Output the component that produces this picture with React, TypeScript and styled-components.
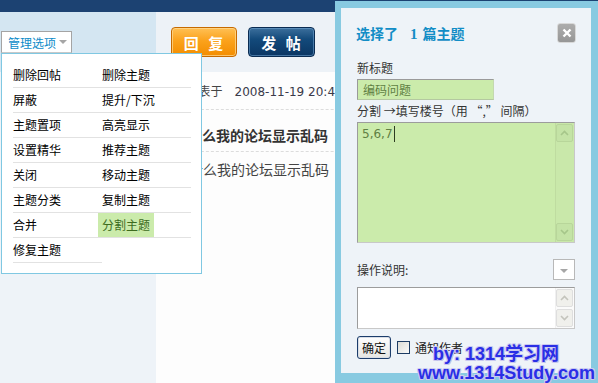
import * as React from 'react'
import styled, { createGlobalStyle, css } from 'styled-components'

const GlobalStyle = createGlobalStyle`
    html, body {
        margin: 0;
        padding: 0;
        background: #ffffff;
    }
    body {
        font-family: "Noto Sans CJK SC", "DejaVu Sans", sans-serif;
        font-size: 12px;
        color: #333;
        width: 598px;
        height: 383px;
        overflow: hidden;
    }
`

const CJK = `"Noto Sans CJK SC", "DejaVu Sans", sans-serif`
const LATIN = `"DejaVu Sans", "Noto Sans CJK SC", sans-serif`

const Page = styled.div`
    position: relative;
    width: 598px;
    height: 383px;
    overflow: hidden;
    background: #fdfdfd;
`

const TopBar = styled.div`
    height: 12px;
    background: #1c4272;
`

const Body = styled.div`
    display: flex;
    height: 371px;
`

const Sidebar = styled.div`
    position: relative;
    width: 156px;
    background: #eef3f8;
`

const SideHead = styled.div`
    height: 60px;
    box-sizing: border-box;
    padding: 19px 0 0 1px;
    background: #d4e6f2;
`

const SelectBox = styled.div`
    display: flex;
    align-items: center;
    justify-content: space-between;
    box-sizing: border-box;
    width: 71px;
    height: 22px;
    padding: 0 4px 0 6px;
    background: #fff;
    border: 1px solid #a4a4a4;
    border-bottom-color: #c8c8c8;
    color: #0c8bc9;
    font-family: ${CJK};
    font-size: 12px;
`

const Caret = styled.span<{ $size?: number }>`
    width: 0;
    height: 0;
    border-left: ${p => p.$size ?? 4}px solid transparent;
    border-right: ${p => p.$size ?? 4}px solid transparent;
    border-top: ${p => p.$size ?? 4}px solid #a6a6a6;
`

const Menu = styled.ul`
    position: absolute;
    top: 41px;
    left: 1px;
    z-index: 5;
    display: grid;
    grid-template-columns: 89px 89px;
    width: 201px;
    box-sizing: border-box;
    margin: 0;
    padding: 9px 11px 10px 11px;
    list-style: none;
    background: #fff;
    border: 1px solid #80c8e2;
`

const MenuItem = styled.li`
    height: 24px;
    border-bottom: 1px solid #e2e2e2;
`

const MenuLink = styled.a<{ $active?: boolean }>`
    display: inline-block;
    margin-left: -4px;
    padding: 0 4px;
    line-height: 24px;
    font-family: ${CJK};
    font-size: 12px;
    color: #000;
    text-decoration: none;
    ${p => p.$active && css`
        background: #cbebab;
        color: #3d6b1e;
    `}
`

const Main = styled.div`
    flex: 1;
    min-width: 0;
    background: #fdfdfd;
`

const Toolbar = styled.div`
    display: flex;
    align-items: center;
    gap: 11px;
    height: 60px;
    box-sizing: border-box;
    padding: 0 0 0 15px;
    background: #edf2f7;
`

const ActionButton = styled.button<{ $tone: 'orange' | 'navy' }>`
    width: ${p => (p.$tone === 'orange' ? 66 : 67)}px;
    height: 30px;
    padding: 0;
    border-radius: 4px;
    font-family: ${CJK};
    font-size: 15px;
    font-weight: 700;
    color: #fff;
    word-spacing: 4px;
    letter-spacing: 1px;
    cursor: pointer;
    ${p => p.$tone === 'orange'
        ? css`
            border: 1px solid #c66a00;
            background: linear-gradient(#ffc055 0%, #fba21c 45%, #f38d00 100%);
            box-shadow: inset 0 0 0 1px rgba(255, 220, 150, 0.7);
        `
        : css`
            border: 1px solid #0a2c52;
            background: linear-gradient(#3c6f9c 0%, #134a7b 40%, #0b3663 100%);
            box-shadow: inset 0 0 0 1px rgba(110, 160, 205, 0.6);
        `}
`

const PostRow = styled.div<{ $pad: string; $dashed?: boolean }>`
    padding: ${p => p.$pad};
    white-space: nowrap;
    ${p => p.$dashed && css`border-bottom: 1px dashed #dcdcdc;`}
`

const Meta = styled.span`
    font-family: ${CJK};
    font-size: 12px;
    line-height: 16px;
    color: #444;
`

const DateText = styled.span`
    margin-left: 12px;
    font-family: ${LATIN};
    font-size: 12px;
    color: #3a3a4a;
`

const PostTitle = styled.h3`
    margin: 0;
    font-family: ${CJK};
    font-size: 14px;
    line-height: 20px;
    font-weight: 700;
    color: #333;
`

const PostBody = styled.p`
    margin: 0;
    font-family: ${CJK};
    font-size: 14px;
    line-height: 20px;
    color: #444;
`

/* ---- dialog ---- */

const Dialog = styled.div`
    position: absolute;
    top: 1px;
    left: 335px;
    z-index: 10;
    width: 263px;
    height: 382px;
    box-sizing: border-box;
    padding: 7px 7px 10px 6px;
    background: #88cae1;
`

const Panel = styled.div`
    height: 100%;
    box-sizing: border-box;
    padding: 15px 16px 0 16px;
    background: #eef3f8;
    display: flex;
    flex-direction: column;
`

const TitleRow = styled.div`
    display: flex;
    align-items: center;
    justify-content: space-between;
    height: 20px;
    margin-right: -1px;
`

const Title = styled.h2`
    margin: 0 0 0 -1px;
    font-family: ${CJK};
    font-size: 14px;
    font-weight: 700;
    color: #128dc6;
`

const Count = styled.span`
    margin: 0 5px 0 12px;
    font-family: "Liberation Serif", serif;
    font-size: 15px;
`

const CloseButton = styled.button`
    display: flex;
    align-items: center;
    justify-content: center;
    width: 19px;
    height: 20px;
    padding: 0;
    border: 1px solid #d8d8d8;
    border-radius: 3px;
    background: linear-gradient(#acacac 0%, #a2a2a2 50%, #969696 100%);
    cursor: pointer;
`

const Label = styled.div<{ $top: number }>`
    margin-top: ${p => p.$top}px;
    font-family: ${CJK};
    font-size: 12px;
    line-height: 16px;
    color: #333;
`

const GreenField = styled.div`
    margin-top: 3px;
    width: 137px;
    height: 21px;
    box-sizing: border-box;
    padding: 0 5px;
    border: 1px solid #9a9a9a;
    border-right-color: #c4d8b0;
    border-bottom-color: #b4c8a0;
    background: #cbebab;
    font-family: ${CJK};
    font-size: 12px;
    line-height: 19px;
    color: #5f7f43;
`

const Area = styled.div<{ $green?: boolean; $top: number; $height: number }>`
    display: flex;
    margin-top: ${p => p.$top}px;
    width: 218px;
    height: ${p => p.$height}px;
    box-sizing: border-box;
    border: 1px solid #9c9c9c;
    border-right-color: #c8c8c8;
    border-bottom-color: #c8c8c8;
    background: ${p => (p.$green ? '#cbebab' : '#ffffff')};
`

const AreaText = styled.div`
    flex: 1;
    padding: 3px 4px;
    font-family: ${LATIN};
    font-size: 12px;
    line-height: 16px;
    color: #5f7f43;
`

const Cursor = styled.span`
    display: inline-block;
    width: 1px;
    height: 16px;
    margin-left: 1px;
    vertical-align: top;
    background: #2c3c20;
`

const ScrollCol = styled.div<{ $green?: boolean }>`
    display: flex;
    flex-direction: column;
    justify-content: space-between;
    width: 17px;
    padding: 1px 1px 1px 0;
    background: ${p => (p.$green ? '#c9e8aa' : '#fbfbfb')};
    border-left: 1px solid ${p => (p.$green ? '#bfdca0' : '#f0f0f0')};
`

const ScrollBtn = styled.div<{ $green?: boolean }>`
    display: flex;
    align-items: center;
    justify-content: center;
    height: 16px;
    border: 1px solid ${p => (p.$green ? '#b8d69a' : '#dedede')};
    border-radius: 2px;
    background: ${p => (p.$green ? '#c4e3a6' : '#f0f0ec')};
`

const NoteRow = styled.div`
    display: flex;
    align-items: center;
    justify-content: space-between;
    margin-top: 16px;
    width: 218px;
`

const SmallSelect = styled.div`
    display: flex;
    align-items: center;
    justify-content: center;
    width: 22px;
    height: 21px;
    box-sizing: border-box;
    padding-top: 2px;
    border: 1px solid #b8b8b8;
    background: #fff;
`

const FootRow = styled.div`
    display: flex;
    align-items: center;
    gap: 6px;
    margin-top: 7px;
`

const OkButton = styled.button`
    width: 34px;
    height: 23px;
    padding: 0;
    border: 1px solid #1c3d6b;
    border-radius: 3px;
    background: linear-gradient(#fefefe, #e6e6e2);
    box-shadow: inset 0 0 0 1px #d8dde6;
    font-family: ${CJK};
    font-size: 12px;
    color: #111;
`

const Check = styled.label`
    display: flex;
    align-items: center;
    gap: 5px;
    font-family: ${CJK};
    font-size: 12px;
    color: #222;
`

const CheckBox = styled.span`
    width: 11px;
    height: 11px;
    border: 1px solid #1d3c64;
    background: linear-gradient(135deg, #dcdcd6, #fafafa);
`

const Watermark = styled.div`
    position: absolute;
    right: 3px;
    bottom: 0;
    z-index: 20;
    font-family: "Liberation Sans", "Noto Sans CJK SC", sans-serif;
    font-weight: 700;
    color: #2a2ee6;
    line-height: 19px;
    text-shadow:
        1px 0 0 #c8c8f0, -1px 0 0 #c8c8f0, 0 1px 0 #c8c8f0, 0 -1px 0 #c8c8f0,
        1px 1px 0 #b8b8e8, -1px -1px 0 #e0e0f8, 1px -1px 0 #d0d0f0, -1px 1px 0 #d0d0f0;
    pointer-events: none;
`

const MarkLine = styled.div<{ $indent?: number }>`
    padding-left: ${p => p.$indent ?? 0}px;
    font-size: 18px;
    white-space: nowrap;
`

const menuItems: { label: string; active?: boolean }[] = [
    { label: '删除回帖' }, { label: '删除主题' },
    { label: '屏蔽' }, { label: '提升/下沉' },
    { label: '主题置项' }, { label: '高亮显示' },
    { label: '设置精华' }, { label: '推荐主题' },
    { label: '关闭' }, { label: '移动主题' },
    { label: '主题分类' }, { label: '复制主题' },
    { label: '合并' }, { label: '分割主题', active: true },
    { label: '修复主题' },
]

const Chevron = ({ up, color }: { up?: boolean; color: string }) => (
    <svg width="9" height="6" viewBox="0 0 9 6">
        <path d={up ? 'M1 5 L4.5 1.5 L8 5' : 'M1 1 L4.5 4.5 L8 1'} fill="none" stroke={color} strokeWidth="1.6" />
    </svg>
)

const FakeScroll = ({ green }: { green?: boolean }) => (
    <ScrollCol $green={green}>
        <ScrollBtn $green={green}><Chevron up color={green ? '#a6c68a' : '#c4c4bc'} /></ScrollBtn>
        <ScrollBtn $green={green}><Chevron color={green ? '#a6c68a' : '#c4c4bc'} /></ScrollBtn>
    </ScrollCol>
)

export default function App(): React.ReactElement {
    return (
        <Page>
            <GlobalStyle />
            <TopBar />
            <Body>
                <Sidebar>
                    <SideHead>
                        <SelectBox>
                            管理选项
                            <Caret />
                        </SelectBox>
                    </SideHead>
                    <Menu>
                        {menuItems.map((item, i) => (
                            <MenuItem key={i.toString()}>
                                <MenuLink href="#" $active={item.active}>{item.label}</MenuLink>
                            </MenuItem>
                        ))}
                    </Menu>
                </Sidebar>
                <Main>
                    <Toolbar>
                        <ActionButton $tone="orange">回 复</ActionButton>
                        <ActionButton $tone="navy">发 帖</ActionButton>
                    </Toolbar>
                    <PostRow $pad="10px 0 10px 18px" $dashed>
                        <Meta>Li 发表于</Meta>
                        <DateText>2008-11-19 20:45</DateText>
                    </PostRow>
                    <PostRow $pad="15px 0 6px 18px" $dashed>
                        <PostTitle>为什么我的论坛显示乱码</PostTitle>
                    </PostRow>
                    <PostRow $pad="7px 0 0 19px">
                        <PostBody>为什么我的论坛显示乱码</PostBody>
                    </PostRow>
                </Main>
            </Body>

            <Dialog>
                <Panel>
                    <TitleRow>
                        <Title>选择了<Count>1</Count>篇主题</Title>
                        <CloseButton aria-label="关闭">
                            <svg width="10" height="10" viewBox="0 0 10 10">
                                <path d="M1.5 1.5 L8.5 8.5 M8.5 1.5 L1.5 8.5" stroke="#fff" strokeWidth="2.4" />
                            </svg>
                        </CloseButton>
                    </TitleRow>
                    <Label $top={17}>新标题</Label>
                    <GreenField>编码问题</GreenField>
                    <Label $top={3}>分割 →填写楼号（用 “,” 间隔）</Label>
                    <Area $green $top={3} $height={121}>
                        <AreaText>5,6,7<Cursor /></AreaText>
                        <FakeScroll green />
                    </Area>
                    <NoteRow>
                        <Label $top={0}>操作说明:</Label>
                        <SmallSelect><Caret $size={4} /></SmallSelect>
                    </NoteRow>
                    <Area $top={7} $height={42}>
                        <AreaText />
                        <FakeScroll />
                    </Area>
                    <FootRow>
                        <OkButton>确定</OkButton>
                        <Check>
                            <CheckBox />
                            通知作者
                        </Check>
                    </FootRow>
                </Panel>
            </Dialog>

            <Watermark>
                <MarkLine $indent={15}>by: 1314学习网</MarkLine>
                <MarkLine>www.1314Study.com</MarkLine>
            </Watermark>
        </Page>
    )
}
